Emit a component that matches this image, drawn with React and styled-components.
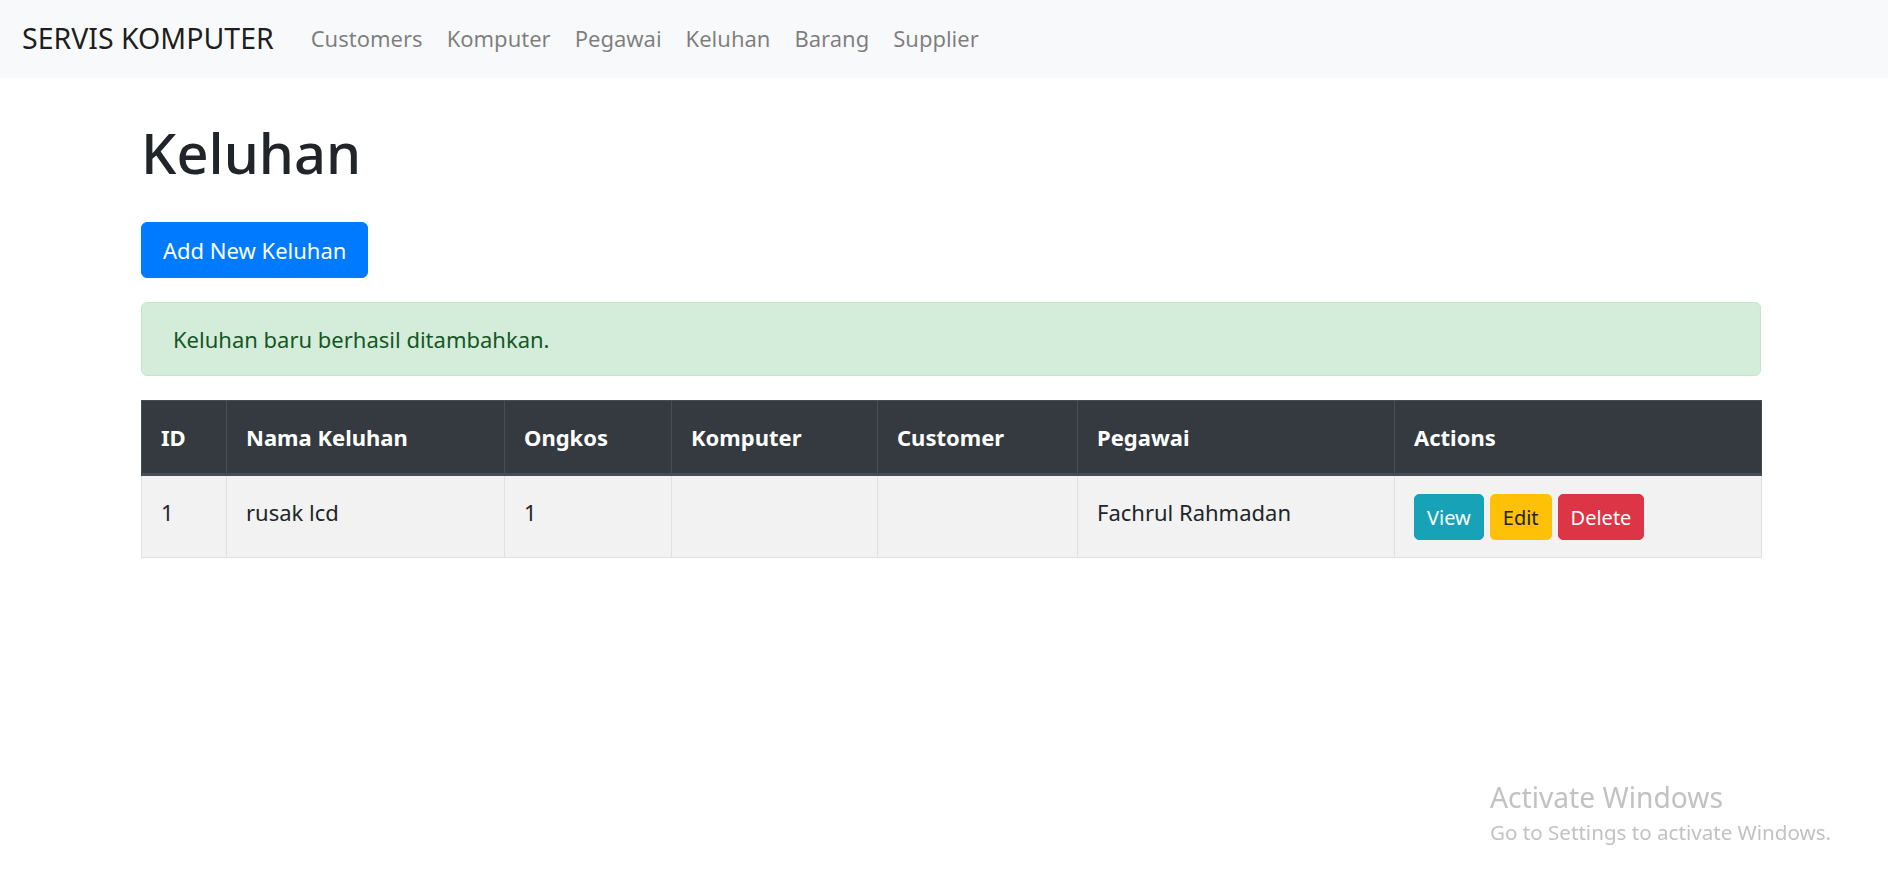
import React from 'react'
import styled, { createGlobalStyle } from 'styled-components'

const GlobalStyle = createGlobalStyle`
  * { box-sizing: border-box; }
  body {
    margin: 0;
    background: #fff;
    color: #212529;
    font-family: "Noto Sans", "Open Sans", sans-serif;
    font-size: 22px;
    line-height: 1.5;
  }
`

const Navbar = styled.nav`
  display: flex;
  align-items: center;
  height: 78px;
  padding: 0 22px 2px;
  background: #f8f9fa;
`

const Brand = styled.a`
  font-size: 28.5px;
  color: rgba(0, 0, 0, 0.9);
  margin-right: 25px;
  text-decoration: none;
`

const NavList = styled.ul`
  display: flex;
  list-style: none;
  margin: 0;
  padding: 0;
`

const NavLink = styled.a`
  display: block;
  padding: 0 12px;
  font-size: 22px;
  color: rgba(0, 0, 0, 0.5);
  text-decoration: none;
`

const Container = styled.main`
  width: 1620px;
  margin-left: 141px;
  padding-top: 38px;
`

const Title = styled.h1`
  margin: 0 0 34px;
  font-size: 56px;
  font-weight: 500;
  line-height: 72px;
  color: #212529;
`

const Button = styled.button`
  display: inline-flex;
  align-items: center;
  justify-content: center;
  height: ${p => (p.small ? '46px' : '56px')};
  padding: 0 ${p => (p.small ? '12px' : '21px')};
  font-family: inherit;
  font-size: ${p => (p.small ? '20px' : '22px')};
  border: 1px solid ${p => p.bg};
  border-radius: ${p => (p.small ? '5px' : '6px')};
  background: ${p => p.bg};
  color: ${p => p.fg || '#fff'};
  cursor: pointer;
`

const Alert = styled.div`
  margin: 24px 0;
  padding: 18px 31px;
  line-height: 36px;
  background: #d4edda;
  border: 1px solid #c3e6cb;
  border-radius: 6px;
  color: #155724;
`

const Table = styled.table`
  width: 1620px;
  border-collapse: collapse;
  table-layout: fixed;
`

const HeadCell = styled.th`
  padding: 18px 19px;
  line-height: 36px;
  text-align: left;
  font-weight: 700;
  color: #fff;
  background: #343a40;
  border: 1px solid #454d55;
  border-bottom-width: 3px;
`

const Cell = styled.td`
  padding: 18px 19px 17px;
  line-height: 37px;
  vertical-align: top;
  background: #f2f2f2;
  border: 1px solid #dee2e6;
`

const Actions = styled.div`
  display: flex;
  gap: 6px;
`

const Watermark = styled.div`
  position: fixed;
  left: 1490px;
  top: 779px;
  color: #c2c2c2;
  pointer-events: none;
`

const WatermarkTitle = styled.div`
  font-size: 28.2px;
  line-height: 36px;
`

const WatermarkText = styled.div`
  font-size: 20.6px;
  line-height: 35px;
`

const links = ['Customers', 'Komputer', 'Pegawai', 'Keluhan', 'Barang', 'Supplier']

const columns = [
  ['ID', 85],
  ['Nama Keluhan', 278],
  ['Ongkos', 167],
  ['Komputer', 206],
  ['Customer', 200],
  ['Pegawai', 317],
  ['Actions', 367],
]

const rows = [
  { id: 1, nama: 'rusak lcd', ongkos: 1, komputer: '', customer: '', pegawai: 'Fachrul Rahmadan' },
]

export default function App() {
  return (
    <>
      <GlobalStyle />
      <Navbar>
        <Brand href="#">SERVIS KOMPUTER</Brand>
        <NavList>
          {links.map(l => (
            <li key={l}><NavLink href="#">{l}</NavLink></li>
          ))}
        </NavList>
      </Navbar>
      <Container>
        <Title>Keluhan</Title>
        <Button bg="#007bff">Add New Keluhan</Button>
        <Alert>Keluhan baru berhasil ditambahkan.</Alert>
        <Table>
          <colgroup>
            {columns.map(([name, w]) => <col key={name} style={{ width: w }} />)}
          </colgroup>
          <thead>
            <tr>
              {columns.map(([name]) => <HeadCell key={name}>{name}</HeadCell>)}
            </tr>
          </thead>
          <tbody>
            {rows.map(r => (
              <tr key={r.id}>
                <Cell>{r.id}</Cell>
                <Cell>{r.nama}</Cell>
                <Cell>{r.ongkos}</Cell>
                <Cell>{r.komputer}</Cell>
                <Cell>{r.customer}</Cell>
                <Cell>{r.pegawai}</Cell>
                <Cell>
                  <Actions>
                    <Button small bg="#17a2b8">View</Button>
                    <Button small bg="#ffc107" fg="#212529">Edit</Button>
                    <Button small bg="#dc3545">Delete</Button>
                  </Actions>
                </Cell>
              </tr>
            ))}
          </tbody>
        </Table>
      </Container>
      <Watermark>
        <WatermarkTitle>Activate Windows</WatermarkTitle>
        <WatermarkText>Go to Settings to activate Windows.</WatermarkText>
      </Watermark>
    </>
  )
}
